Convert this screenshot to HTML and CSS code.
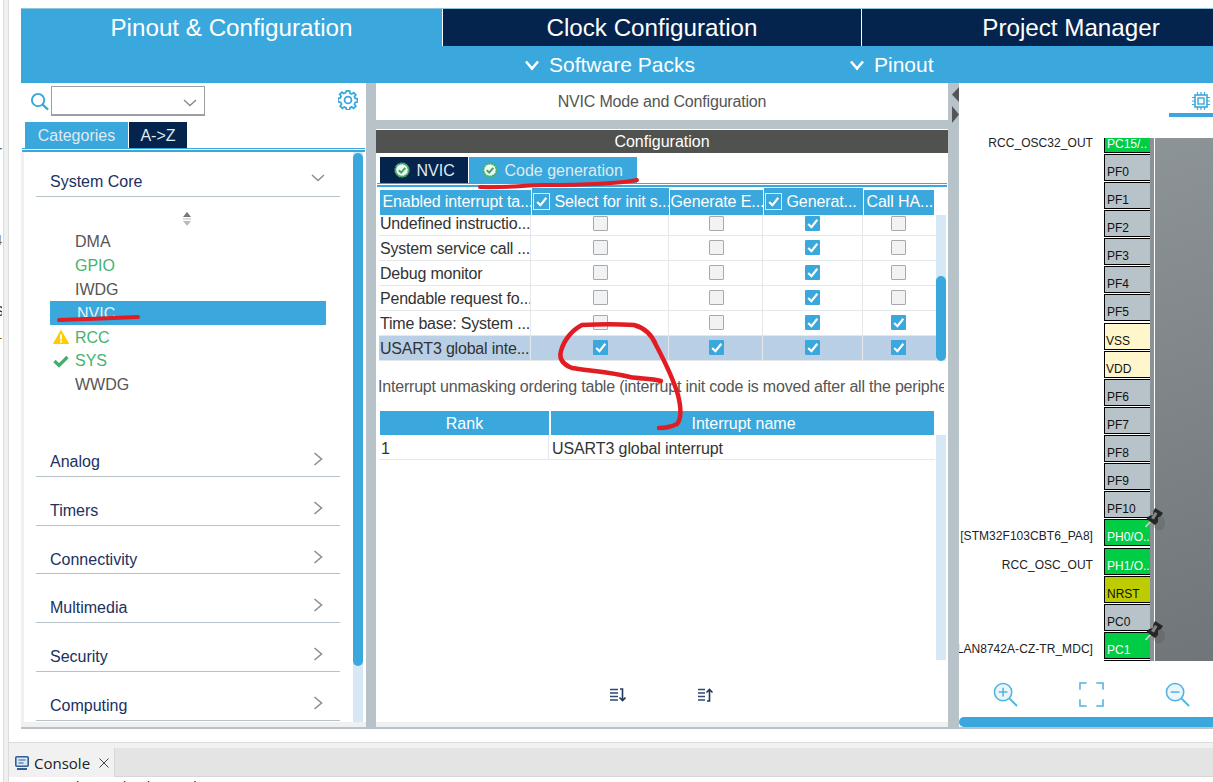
FILE: index.html
```html
<!DOCTYPE html>
<html lang="en">
<head>
<meta charset="utf-8">
<title>NVIC Mode and Configuration</title>
<link rel="stylesheet" href="styles.css">
</head>
<body>
<svg class="defs" width="0" height="0">
  <symbol id="tick" viewBox="0 0 14 14"><path d="M3 7.5 6 10.5 11.5 3.5" fill="none" stroke="#fff" stroke-width="2"/></symbol>
  <symbol id="ok" viewBox="0 0 16 16"><circle cx="8" cy="8" r="6.6" fill="#eef8f1" stroke="#45ad6b" stroke-width="2" stroke-dasharray="2.4 .5"/><path d="M4.8 8.2 7.2 10.6 11.3 5.8" fill="none" stroke="#3fa565" stroke-width="2"/></symbol>
  <symbol id="chev-right" viewBox="0 0 10 14"><path d="M1.5 1 8.5 7 1.5 13" fill="none" stroke="#8f8f8f" stroke-width="1.6"/></symbol>
  <symbol id="chev-down" viewBox="0 0 14 8"><path d="M1 1 7 6.5 13 1" fill="none" stroke="#8a8a8a" stroke-width="1.4"/></symbol>
  <symbol id="thumbtack" viewBox="0 0 20 24"><ellipse cx="14" cy="15" rx="6" ry="7.5" fill="#555" opacity=".3"/><path d="M.5 19 6 13" stroke="#d0d0d0" stroke-width="1.6"/><path d="M10 0 18 5 16 8 13 9.5 13 14 10 17 1.5 11 4 8 8 7 8.5 3Z" fill="#262626"/><path d="M10 4 12.5 5.5 9 11.5 6 10Z" fill="#858585"/></symbol>
</svg>

<div class="gutter">
  <span class="stray stray-r">r</span>
  <span class="stray stray-c">4:</span>
  <span class="stray stray-s">S</span>
  <span class="stray stray-1">1</span>
</div>

<div class="page">
  <div class="app">
    <nav class="tabs">
      <div class="tab tab-active">Pinout &amp; Configuration</div>
      <div class="tab">Clock Configuration</div>
      <div class="tab">Project Manager</div>
    </nav>
    <div class="subbar">
      <div class="sub-item sub-packs"><svg class="sub-arrow" viewBox="0 0 16 12"><path d="M2 2.5 8 9.5 14 2.5" fill="none" stroke="#fff" stroke-width="2.6"/></svg>Software Packs</div>
      <div class="sub-item"><svg class="sub-arrow" viewBox="0 0 16 12"><path d="M2 2.5 8 9.5 14 2.5" fill="none" stroke="#fff" stroke-width="2.6"/></svg>Pinout</div>
    </div>

    <main class="workspace">
      <aside class="left">
        <div class="search">
          <svg class="search-icon" viewBox="0 0 20 20"><circle cx="8.5" cy="8.5" r="6.5" fill="none" stroke="#3aa8dc" stroke-width="2"/><path d="M13 13 19 18.5" stroke="#3aa8dc" stroke-width="2.4"/></svg>
          <div class="combo"><svg class="combo-arrow"><use href="#chev-down"/></svg></div>
          <svg class="gear" viewBox="0 0 22 22"><path d="M9.3 1h3.4l.5 2.6 1.9.8 2.2-1.5 2.3 2.4-1.5 2.1.8 1.9 2.6.5v3.4l-2.6.5-.8 1.9 1.5 2.2-2.4 2.3-2.1-1.5-1.9.8-.5 2.6H9.3l-.5-2.6-1.9-.8-2.2 1.5-2.3-2.4 1.5-2.1-.8-1.9L0 12.7V9.3l2.6-.5.8-1.9-1.5-2.2 2.4-2.3 2.1 1.5 1.9-.8Z" fill="none" stroke="#3aa8dc" stroke-width="2"/><circle cx="11" cy="11" r="3.8" fill="none" stroke="#3aa8dc" stroke-width="2"/></svg>
        </div>
        <div class="left-tabs">
          <div class="left-tab left-tab-on">Categories</div>
          <div class="left-tab">A-&gt;Z</div>
        </div>
        <div class="double-rule"></div>
        <div class="left-body">
          <div class="cats">
            <div class="cat cat-open"><span>System Core</span><svg class="cat-down"><use href="#chev-down"/></svg></div>
            <svg class="sort-mini" viewBox="0 0 10 14"><path d="M5 0 9 5H1Z" fill="#777"/><path d="M1 9H9L5 14Z" fill="#bbb"/><rect x="1" y="6" width="8" height="2" fill="#ddd"/></svg>
            <ul class="periph">
              <li class="item">DMA</li>
              <li class="item item-green">GPIO</li>
              <li class="item">IWDG</li>
              <li class="item item-on">NVIC</li>
              <li class="item item-green item-mid"><svg class="status" viewBox="0 0 16 14"><path d="M8 .5 15.5 13.5H.5Z" fill="#fc0" stroke="#fc0" stroke-linejoin="round"/><rect x="7" y="4.5" width="2" height="5" fill="#fff"/><rect x="7" y="10.5" width="2" height="2" fill="#fff"/></svg>RCC</li>
              <li class="item item-green item-tight"><svg class="status" viewBox="0 0 16 14"><path d="M1.5 7 6 11.5 14.5 3" fill="none" stroke="#45ad6b" stroke-width="3.2"/></svg>SYS</li>
              <li class="item item-tight">WWDG</li>
            </ul>
            <div class="cat cat-first"><span>Analog</span><svg class="cat-next"><use href="#chev-right"/></svg></div>
            <div class="cat"><span>Timers</span><svg class="cat-next"><use href="#chev-right"/></svg></div>
            <div class="cat cat-short cat-blue"><span>Connectivity</span><svg class="cat-next"><use href="#chev-right"/></svg></div>
            <div class="cat"><span>Multimedia</span><svg class="cat-next"><use href="#chev-right"/></svg></div>
            <div class="cat"><span>Security</span><svg class="cat-next"><use href="#chev-right"/></svg></div>
            <div class="cat"><span>Computing</span><svg class="cat-next"><use href="#chev-right"/></svg></div>
          </div>
          <div class="track left-track"><div class="thumb left-thumb"></div></div>
        </div>
      </aside>

      <section class="mid">
        <header class="mid-head">NVIC Mode and Configuration</header>
        <div class="config-bar">Configuration</div>
        <div class="config">
          <div class="mid-tabs">
            <div class="mid-tab"><svg class="ok"><use href="#ok"/></svg>NVIC</div>
            <div class="mid-tab mid-tab-on"><svg class="ok"><use href="#ok"/></svg>Code generation</div>
          </div>
          <div class="double-rule double-rule-mid"></div>

          <div class="grid-head">
            <div class="th th-low th-first">Enabled interrupt ta...</div>
            <div class="th"><span class="head-check"><svg><use href="#tick"/></svg></span>Select for init s...</div>
            <div class="th th-low">Generate E...</div>
            <div class="th"><span class="head-check"><svg><use href="#tick"/></svg></span>Generat...</div>
            <div class="th th-low th-last">Call HA...</div>
          </div>
          <div class="grid-wrap">
            <div class="grid-rows">
              <div class="tr tr-clip"><div class="td td-name">Undefined instructio...</div><div class="td"><i class="cb"></i></div><div class="td"><i class="cb"></i></div><div class="td"><i class="cb cb-on"><svg><use href="#tick"/></svg></i></div><div class="td"><i class="cb"></i></div></div>
              <div class="tr"><div class="td td-name">System service call ...</div><div class="td"><i class="cb"></i></div><div class="td"><i class="cb"></i></div><div class="td"><i class="cb cb-on"><svg><use href="#tick"/></svg></i></div><div class="td"><i class="cb"></i></div></div>
              <div class="tr"><div class="td td-name">Debug monitor</div><div class="td"><i class="cb"></i></div><div class="td"><i class="cb"></i></div><div class="td"><i class="cb cb-on"><svg><use href="#tick"/></svg></i></div><div class="td"><i class="cb"></i></div></div>
              <div class="tr"><div class="td td-name">Pendable request fo...</div><div class="td"><i class="cb"></i></div><div class="td"><i class="cb"></i></div><div class="td"><i class="cb cb-on"><svg><use href="#tick"/></svg></i></div><div class="td"><i class="cb"></i></div></div>
              <div class="tr"><div class="td td-name">Time base: System ...</div><div class="td"><i class="cb"></i></div><div class="td"><i class="cb"></i></div><div class="td"><i class="cb cb-on"><svg><use href="#tick"/></svg></i></div><div class="td"><i class="cb cb-on"><svg><use href="#tick"/></svg></i></div></div>
              <div class="tr tr-on"><div class="td td-name">USART3 global inte...</div><div class="td"><i class="cb cb-on"><svg><use href="#tick"/></svg></i></div><div class="td"><i class="cb cb-on"><svg><use href="#tick"/></svg></i></div><div class="td"><i class="cb cb-on"><svg><use href="#tick"/></svg></i></div><div class="td"><i class="cb cb-on"><svg><use href="#tick"/></svg></i></div></div>
            </div>
            <div class="track grid-track"><div class="thumb grid-thumb"></div></div>
          </div>

          <p class="unmask">Interrupt unmasking ordering table (interrupt init code is moved after all the peripheral init code)</p>

          <div class="rank-head"><div class="rank-th rank-col">Rank</div><div class="rank-th rank-name">Interrupt name</div></div>
          <div class="rank-wrap">
            <div class="rank-rows">
              <div class="rank-tr"><div class="rank-col rank-td">1</div><div class="rank-name rank-td rank-text">USART3 global interrupt</div></div>
            </div>
            <div class="track rank-track"></div>
          </div>
          <div class="sort-tools">
            <svg class="sort-tool" viewBox="0 0 16 14"><path d="M0 1.5H8M0 5H8M0 8.5H8M0 12H8" stroke="#2f4a70" stroke-width="1.6"/><path d="M10 1H12.5V12M9.5 9.5 12.5 12.5 15.5 9.5" fill="none" stroke="#1f3a60" stroke-width="1.6"/></svg>
            <svg class="sort-tool" viewBox="0 0 16 14"><path d="M0 1.5H7M0 5H7M0 8.5H7M0 12H7" stroke="#2f4a70" stroke-width="1.6"/><path d="M9 13H11.5V2M8.5 4.5 11.5 1.5 14.5 4.5" fill="none" stroke="#1f3a60" stroke-width="1.6"/></svg>
          </div>
        </div>
      </section>

      <div class="splitter">
        <i class="split-left"></i>
        <i class="split-right"></i>
      </div>

      <section class="right">
        <div class="view-tabs">
          <div class="view-tab">
            <svg class="chip-icon" viewBox="0 0 18 18"><rect x="3" y="3" width="12" height="12" fill="none" stroke="#3aa8dc" stroke-width="1.6"/><rect x="6" y="6" width="6" height="6" fill="none" stroke="#3aa8dc" stroke-width="1.4"/><path d="M5.5 0V3M9 0V3M12.5 0V3M5.5 15V18M9 15V18M12.5 15V18M0 5.5H3M0 9H3M0 12.5H3M15 5.5H18M15 9H18M15 12.5H18" stroke="#3aa8dc" stroke-width="1.2"/></svg>
          </div>
        </div>
        <div class="pinout">
          <div class="pin-list">
            <div class="pin-row pin-row-clip"><span class="pin-label">RCC_OSC32_OUT</span><div class="pin pin-green">PC15/..</div></div>
            <div class="pin-row"><div class="pin">PF0</div></div>
            <div class="pin-row"><div class="pin">PF1</div></div>
            <div class="pin-row"><div class="pin">PF2</div></div>
            <div class="pin-row"><div class="pin">PF3</div></div>
            <div class="pin-row"><div class="pin">PF4</div></div>
            <div class="pin-row"><div class="pin">PF5</div></div>
            <div class="pin-row pin-row-gap"><div class="pin pin-power">VSS</div></div>
            <div class="pin-row"><div class="pin pin-power">VDD</div></div>
            <div class="pin-row"><div class="pin">PF6</div></div>
            <div class="pin-row"><div class="pin">PF7</div></div>
            <div class="pin-row"><div class="pin">PF8</div></div>
            <div class="pin-row"><div class="pin">PF9</div></div>
            <div class="pin-row"><div class="pin">PF10</div></div>
            <div class="pin-row"><span class="pin-label">[STM32F103CBT6_PA8]</span><div class="pin pin-green">PH0/O..</div></div>
            <div class="pin-row pin-row-gap"><span class="pin-label">RCC_OSC_OUT</span><div class="pin pin-green">PH1/O..</div></div>
            <div class="pin-row"><div class="pin pin-reset">NRST</div></div>
            <div class="pin-row"><div class="pin">PC0</div></div>
            <div class="pin-row"><span class="pin-label">LAN8742A-CZ-TR_MDC]</span><div class="pin pin-green">PC1</div></div>
            <div class="pin-row"><div class="pin"></div></div>
          </div>
          <div class="chip-edge"></div>
          <div class="chip"></div>
          <svg class="tack tack-a"><use href="#thumbtack"/></svg>
          <svg class="tack tack-b"><use href="#thumbtack"/></svg>
        </div>
        <div class="zoom-tools">
          <svg class="zoom-tool" viewBox="0 0 26 26"><circle cx="10.5" cy="10.5" r="9" fill="#eaf6fc" stroke="#52b3e0" stroke-width="1.6"/><path d="M6 10.5H15M10.5 6V15" stroke="#52b3e0" stroke-width="1.6"/><path d="M17 17 25 25" stroke="#52b3e0" stroke-width="2"/></svg>
          <svg class="zoom-tool" viewBox="0 0 26 26"><path d="M8 1H1V8M18 1H25V8M8 25H1V18M18 25H25V18" fill="none" stroke="#52b3e0" stroke-width="1.6"/></svg>
          <svg class="zoom-tool" viewBox="0 0 26 26"><circle cx="10.5" cy="10.5" r="9" fill="#eaf6fc" stroke="#52b3e0" stroke-width="1.6"/><path d="M6 10.5H15" stroke="#52b3e0" stroke-width="1.6"/><path d="M17 17 25 25" stroke="#52b3e0" stroke-width="2"/></svg>
        </div>
        <div class="h-scroll"></div>
      </section>
    </main>
  </div>

  <footer class="console">
    <div class="console-bar">
      <div class="console-tab">
        <svg class="console-icon" viewBox="0 0 14 14"><rect x=".8" y=".8" width="12.4" height="9.4" rx="1" fill="#dbe7f3" stroke="#2f5f93" stroke-width="1.6"/><path d="M3.5 4H10.5M3.5 7H8.5" stroke="#2f5f93" stroke-width="1.2"/><path d="M2 13H12" stroke="#2f5f93" stroke-width="2"/></svg>
        <span>Console</span>
        <svg class="console-close" viewBox="0 0 10 10"><path d="M.5 .5 9.5 9.5M9.5 .5 .5 9.5" stroke="#444" stroke-width="1"/></svg>
      </div>
    </div>
    <div class="console-msg">No consoles to display at this time.</div>
  </footer>
</div>

<svg class="marks" viewBox="0 0 1213 782" width="1213" height="782">
  <path d="M59 320C80 319 115 318 138 317" />
  <path d="M480 187C510 188 525 185 545 185C580 185 615 184 637 180" />
  <path class="mark-ring" d="M661 381C650 378 640 379 630 377C612 372 590 371 572 368C562 364 559 358 561 351C564 340 572 330 582 325C598 324 620 324 634 325C645 328 652 335 656 345C665 362 673 378 678 395C681 407 682 418 677 424C671 427 665 428 659 428" />
</svg>
</body>
</html>
```
FILE: styles.css
```css
html, body { margin: 0; height: 782px; overflow: hidden; background: #fff; }
body { display: flex; width: 1213px; font-family: "Liberation Sans", Arial, sans-serif; font-size: 16px; color: #333; position: relative; }
.defs { position: absolute; }
svg { display: block; }

/* far-left window fragment */
.gutter { width: 8px; height: 782px; flex: none; position: relative; box-sizing: border-box; background: linear-gradient(to right, #fff 0 3px, #dcdcdc 3px 4px, #f0f0f0 4px 8px); }
.stray { position: absolute; left: -5px; font-size: 15px; line-height: 16px; width: 8px; overflow: hidden; }
.stray-r { top: 143px; left: -3px; color: #1b5c8f; }
.stray-c { top: 232px; left: -6px; color: #7a6a2a; }
.stray-s { top: 303px; left: -6px; color: #333; }
.stray-1 { top: 326px; left: -6px; color: #8a5a20; }

.page { flex: 1; min-width: 0; display: flex; flex-direction: column; border-left: 1px solid #dcdcdc; height: 782px; }
.app { height: 743px; padding: 8px 0 0 12px; box-sizing: border-box; flex: none; overflow: hidden; border-bottom: 1px solid #dcdcdc; }

/* top tabs */
.tabs { display: flex; gap: 1px; height: 38px; box-sizing: border-box; border-top: 1px solid #8fc4de; overflow: hidden; }
.tab { flex: none; width: 418px; background: #04244d; color: #fff; font-size: 24.2px; display: flex; align-items: center; justify-content: center; box-sizing: border-box; }
.tab-active { width: 421px; background: #3aa8dc; }
.subbar { height: 37px; background: #3aa8dc; display: flex; align-items: center; padding-left: 503px; color: #fff; font-size: 21px; }
.sub-item { display: flex; align-items: center; gap: 9px; }
.sub-packs { width: 325px; }
.sub-arrow { width: 16px; height: 12px; }

/* workspace */
.workspace { display: flex; height: 646px; background: #b7c3c9; box-sizing: border-box; padding-bottom: 2px; }
.left { width: 345px; flex: none; background: #fff; display: flex; flex-direction: column; }
.search { height: 39px; box-sizing: border-box; padding: 3px 8px 0 9px; display: flex; align-items: flex-start; }
.search-icon { width: 19px; height: 19px; margin: 6px 2px 0 0; }
.combo { width: 154px; height: 30px; box-sizing: border-box; border: 1px solid #9a9fa3; box-shadow: inset 0 -1px 0 #9a9fa3; display: flex; align-items: center; justify-content: flex-end; padding: 4px 7px 0 0; }
.combo-arrow { width: 14px; height: 8px; }
.gear { width: 20px; height: 20px; margin: 4px 0 0 auto; }
.left-tabs { display: flex; gap: 1px; height: 26px; padding-left: 4px; font-size: 16px; color: #fff; }
.left-tab { background: #04244d; width: 58px; display: flex; align-items: center; justify-content: center; color: #dfeaf2; padding-top: 2px; box-sizing: border-box; }
.left-tab-on { background: #3aa8dc; width: 103px; }
.double-rule { height: 4px; margin: 0 1px; box-sizing: border-box; border-top: 1px solid #3aa8dc; border-bottom: 2px solid #3aa8dc; }
.double-rule-mid { margin: 0 1px; height: 4px; }
.left-body { flex: 1; min-height: 0; display: flex; border-left: 3px solid #f0f0f0; border-bottom: 5px solid #f0f0f0; padding-right: 3px; overflow: hidden; }
.cats { width: 329px; flex: none; padding-left: 12px; padding-right: 13px; box-sizing: border-box; }
.cat { height: 49px; box-sizing: border-box; border-bottom: 1px solid #b7c3c9; display: flex; align-items: flex-end; justify-content: space-between; padding: 0 17px 4px 14px; color: #20305f; line-height: 20px; }
.cat-open { height: 45px; padding-bottom: 4px; }
.cat-short { height: 48px; padding-bottom: 3px; }
.cat-blue { border-bottom-color: #aebfdd; }
.cat-next { width: 10px; height: 14px; margin-bottom: 6px; }
.cat-down { width: 14px; height: 8px; margin: 0 -2px 10px 0; }
.sort-mini { width: 10px; height: 14px; margin: 15px 0 0 146px; }
.periph { list-style: none; margin: 3px 0 0 14px; padding: 0; width: 276px; height: 199px; }
.item { height: 24px; box-sizing: border-box; display: flex; align-items: center; padding: 2px 0 0 25px; position: relative; color: #555; }
.item-mid { padding-top: 1px; }
.item-tight { padding-top: 0; }
.item-green { color: #45b36f; }
.item-on { background: #3aa8dc; color: #e6f4fb; padding-left: 27px; }
.status { position: absolute; left: 3px; top: 5px; width: 16px; height: 14px; }
.track { background: #d6e7f5; width: 10px; flex: none; }
.thumb { background: #3aa8dc; border-radius: 5px; }
.left-track { height: 100%; }
.left-thumb { height: 513px; margin-top: 1px; }

/* middle */
.mid { width: 572px; flex: none; margin-left: 10px; display: flex; flex-direction: column; }
.mid-head { height: 37px; background: #fff; display: flex; align-items: center; justify-content: center; color: #555; letter-spacing: -.18px; }
.config-bar { margin-top: 10px; height: 23px; background: #505250; color: #fff; display: flex; align-items: center; justify-content: center; box-shadow: 0 -1px 0 #fff; }
.config { flex: 1; min-height: 0; background: #fff; border-bottom: 5px solid #f0f0f0; overflow: hidden; }
.mid-tabs { display: flex; gap: 1px; height: 26px; padding: 4px 0 0 3.5px; color: #dfeaf2; }
.mid-tab { background: #04244d; display: flex; align-items: center; gap: 7px; width: 88px; box-sizing: border-box; padding: 1px 0 0 14px; }
.mid-tab-on { background: #3aa8dc; width: 168px; padding-left: 13px; gap: 7px; }
.ok { width: 16px; height: 16px; margin-top: -2px; }

.grid-head, .tr { display: grid; grid-template-columns: 152px 138px 94px 100px 71px; }
.grid-head { margin: 1px 0 0 3.5px; height: 27px; color: #fff; width: 555px; }
.th { background: #3aa8dc; margin-right: 1px; display: flex; align-items: center; white-space: nowrap; overflow: hidden; line-height: 25px; letter-spacing: -.1px; }
.th-low { margin-top: 2px; padding: 0 0 2px 1px; box-sizing: border-box; }
.th-first { padding-left: 3px; }
.th-last { padding-left: 3px; }
.head-check { width: 17px; height: 17px; flex: none; box-sizing: border-box; border: 1px solid #d6eef9; margin: 0 5px 0 1px; display: flex; }
.head-check svg { width: 15px; height: 15px; }
.grid-wrap { display: flex; height: 146px; padding-left: 3px; }
.grid-rows { width: 557px; }
.tr { height: 25px; box-sizing: border-box; border-bottom: 1px solid #e5e8ea; }
.tr-clip { height: 21px; }
.tr-on { background: #b8cfe6; }
.td { display: flex; align-items: center; justify-content: center; border-right: 1px solid #e5e8ea; padding-bottom: 2px; }
.td:nth-child(2), .td:nth-child(3) { padding-left: 2px; }
.td-name { justify-content: flex-start; padding: 2px 0 0 1px; white-space: nowrap; overflow: hidden; letter-spacing: -.2px; }
.tr-clip .td { padding-bottom: 4px; }
.tr-clip .td-name { padding: 0 0 2px 1px; }
.tr .td:last-child { border-right: 0; }
.cb { width: 15px; height: 15px; box-sizing: border-box; border: 1.5px solid #a9a9a9; border-radius: 1px; background: #f1f2f3; display: block; }
.cb-on { border: 0; background: #3aa8dc; }
.cb-on svg { width: 15px; height: 15px; }
.grid-track { height: 146px; }
.grid-thumb { height: 85px; margin-top: 61px; }
.unmask { margin: 0 4px 0 2px; height: 50px; line-height: 52px; white-space: nowrap; overflow: hidden; color: #555; letter-spacing: -.2px; }
.rank-head { display: flex; height: 24px; margin-left: 4px; width: 554px; color: #fff; gap: 2px; }
.rank-th { background: #3aa8dc; display: flex; align-items: center; justify-content: center; padding-top: 2px; box-sizing: border-box; }
.rank-col { width: 169px; flex: none; }
.rank-name { flex: 1; padding-left: 2px; }
.rank-wrap { display: flex; height: 225px; padding-left: 3px; }
.rank-rows { width: 557px; flex: none; }
.rank-tr { display: flex; height: 25px; box-sizing: border-box; border-bottom: 1px solid #e5e8ea; padding-top: 4px; width: 556px; }
.rank-td { display: flex; align-items: center; padding-left: 2px; box-sizing: border-box; }
.rank-td.rank-col { width: 170px; border-right: 1px solid #e5e8ea; margin-top: -4px; padding-top: 4px; }
.rank-text { letter-spacing: -.1px; padding-left: 3px; }
.rank-track { height: 225px; }
.sort-tools { display: flex; gap: 72px; padding: 28px 0 0 234px; }
.sort-tool { width: 16px; height: 14px; }

/* splitter */
.splitter { width: 11px; flex: none; display: flex; flex-direction: column; padding: 4px 0 0 4px; box-sizing: border-box; gap: 3px; }
.splitter i { display: block; width: 7px; height: 15px; background: #555; }
.split-left { clip-path: polygon(100% 0, 0 50%, 100% 100%); }
.split-right { clip-path: polygon(0 0, 100% 50%, 0 100%); margin-top: 1px; height: 17px !important; }

/* right */
.right { flex: 1; min-width: 0; background: #fff; display: flex; flex-direction: column; position: relative; }
.view-tabs { height: 55px; display: flex; justify-content: flex-end; }
.view-tab { width: 44px; height: 34px; box-sizing: border-box; border-bottom: 4px solid #3aa8dc; padding: 9px 0 0 23px; }
.chip-icon { width: 18px; height: 18px; }
.pinout { display: flex; height: 523px; overflow: hidden; position: relative; }
.pin-list { width: 192px; flex: none; }
.pin-row { display: flex; justify-content: flex-end; align-items: flex-end; gap: 11px; height: 27px; margin-top: 1px; white-space: nowrap; font-size: 12px; }
.pin-row-clip { margin-top: -12px; }
.pin-row-gap { margin-top: 2px; }
.pin-label { color: #222; letter-spacing: .05px; padding-bottom: 3px; line-height: 14px; }
.pin { width: 47px; height: 27px; flex: none; box-sizing: border-box; border: 1px solid #000; background: #b7c3c9; color: #111; padding: 0 0 1px 2px; display: flex; align-items: flex-end; line-height: 14px; overflow: hidden; }
.pin-green { background: #00cc44; color: #fff; }
.pin-power { background: #fff6cc; padding-left: 1px; }
.pin-reset { background: #bccc00; }
.chip-edge { width: 4px; flex: none; background: #8b9297; border-right: 1px solid #fff; margin-left: -1px; }
.chip { flex: 1; background: linear-gradient(160deg, #8d9498, #6f7578); }
.tack { position: absolute; width: 20px; height: 24px; left: 186px; }
.tack-a { top: 370px; }
.tack-b { top: 483px; }
.zoom-tools { display: flex; gap: 61px; padding: 21px 0 0 34px; height: 56px; box-sizing: border-box; }
.zoom-tool { width: 25px; height: 25px; }
.h-scroll { height: 10px; background: #3aa8dc; border-radius: 5px 0 0 5px; }

/* console */
.console { flex: 1; min-height: 0; overflow: hidden; background: #fff; }
.console-bar { margin-top: 5px; height: 29px; background: #e4e4e4; box-sizing: border-box; border-bottom: 1px solid #d6d6d6; box-shadow: 0 -5px 0 #f1f1f1; display: flex; }
.console-tab { width: 106px; background: #f1f1f1; border-right: 1px solid #d6d6d6; display: flex; align-items: center; padding-left: 6px; box-sizing: border-box; gap: 5px; font-family: "Open Sans", "Noto Sans", sans-serif; font-size: 15px; color: #222; height: 29px; }
.console-icon { width: 14px; height: 14px; }
.console-close { width: 10px; height: 10px; margin-left: 4px; }
.console-msg { font-family: "Open Sans", sans-serif; font-size: 15px; line-height: 18px; padding-left: 1px; color: #222; }

/* red annotations drawn over the screenshot */
.marks { position: absolute; left: 0; top: 0; pointer-events: none; }
.marks path { fill: none; stroke: #e21c23; stroke-width: 4; stroke-linecap: round; stroke-linejoin: round; }
.marks .mark-ring { stroke-width: 4.5; }
```
